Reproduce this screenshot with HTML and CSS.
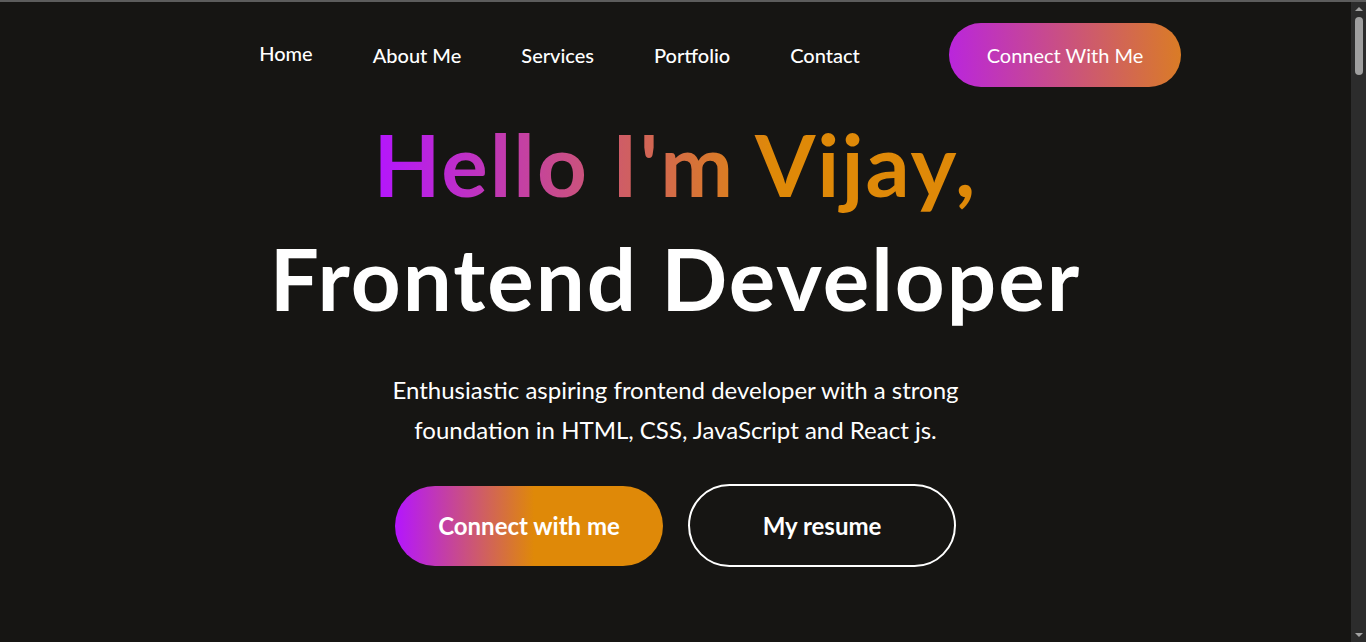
FILE: index.html
```html
<!DOCTYPE html>
<html lang="en">
<head>
<meta charset="utf-8">
<title>Vijay Portfolio</title>
<link rel="stylesheet" href="styles.css">
</head>
<body>
<div class="topline"></div>
<div class="frame">
  <main class="page">
    <nav class="navbar">
      <div class="logo"></div>
      <ul class="nav-menu">
        <li class="nav-item nav-home">Home</li>
        <li class="nav-item">About Me</li>
        <li class="nav-item">Services</li>
        <li class="nav-item">Portfolio</li>
        <li class="nav-item">Contact</li>
      </ul>
      <div class="nav-connect">Connect With Me</div>
    </nav>
    <section class="hero">
      <h1 class="hero-title"><span class="grad">Hello I'm Vijay,</span><br>Frontend Developer</h1>
      <p class="hero-text">Enthusiastic aspiring frontend developer with a strong foundation in HTML, CSS, JavaScript and React js.</p>
      <div class="hero-action">
        <div class="hero-connect">Connect with me</div>
        <div class="hero-resume">My resume</div>
      </div>
    </section>
  </main>
  <aside class="scrollbar">
    <div class="sb-arrow sb-up"></div>
    <div class="sb-track"><div class="sb-thumb"></div></div>
    <div class="sb-arrow sb-down"></div>
  </aside>
</div>
</body>
</html>
```
FILE: styles.css
```css
html, body {
  height: 100%;
}
body {
  margin: 0;
  background: #161513;
  color: #ffffff;
  font-family: "Lato", "Liberation Sans", sans-serif;
  overflow: hidden;
  display: flex;
  flex-direction: column;
}
.topline {
  height: 2px;
  flex: none;
  background: #5c5c5c;
}
.frame {
  flex: 1;
  display: flex;
  min-height: 0;
}
.page {
  flex: 1;
  min-width: 0;
}
.navbar {
  display: flex;
  align-items: center;
  justify-content: space-between;
  margin: 21px 170px 0 170px;
}
.logo {
  width: 0;
  height: 0;
}
.nav-menu {
  display: flex;
  align-items: center;
  list-style: none;
  gap: 60px;
  margin: 0;
  padding: 0;
  font-size: 20px;
  font-weight: 500;
}
.nav-home {
  margin-bottom: 4px;
}
.nav-connect {
  width: 232px;
  height: 64px;
  display: flex;
  align-items: center;
  justify-content: center;
  border-radius: 50px;
  font-size: 20px;
  background: linear-gradient(267deg, #DA7C25 0.36%, #B923E1 102.06%);
}
.hero {
  display: flex;
  flex-direction: column;
  align-items: center;
}
.hero-title {
  margin: 20px 0 0 0;
  text-align: center;
  font-size: 87px;
  line-height: 114px;
  font-weight: 700;
  letter-spacing: 2px;
}
.grad {
  background: linear-gradient(90deg, #B415FF 0%, #DF8908 66%);
  -webkit-background-clip: text;
  background-clip: text;
  color: transparent;
}
.hero-text {
  width: 600px;
  margin: 35px 0 0 0;
  text-align: center;
  font-size: 24px;
  line-height: 40px;
}
.hero-action {
  display: flex;
  align-items: center;
  gap: 25px;
  margin-top: 34px;
  font-size: 24px;
  font-weight: 700;
}
.hero-connect {
  width: 268px;
  height: 80px;
  display: flex;
  align-items: center;
  justify-content: center;
  border-radius: 50px;
  background: linear-gradient(90deg, #B415FF 0%, #DF8908 52%);
}
.hero-resume {
  width: 268px;
  height: 83px;
  display: flex;
  align-items: center;
  justify-content: center;
  box-sizing: border-box;
  border-radius: 50px;
  border: 2px solid #ffffff;
}
.scrollbar {
  width: 15px;
  flex: none;
  background: #2c2c2c;
  display: flex;
  flex-direction: column;
  align-items: center;
}
.sb-arrow {
  width: 0;
  height: 0;
  border-left: 4.5px solid transparent;
  border-right: 4.5px solid transparent;
  flex: none;
}
.sb-up {
  margin-top: 5px;
  border-bottom: 4px solid #a3a3a3;
}
.sb-down {
  margin-bottom: 5px;
  border-top: 4px solid #a3a3a3;
}
.sb-track {
  flex: 1;
  width: 100%;
  display: flex;
  justify-content: center;
  padding-top: 6px;
}
.sb-thumb {
  width: 8px;
  height: 58px;
  border-radius: 4px;
  background: #9f9f9f;
}
```
